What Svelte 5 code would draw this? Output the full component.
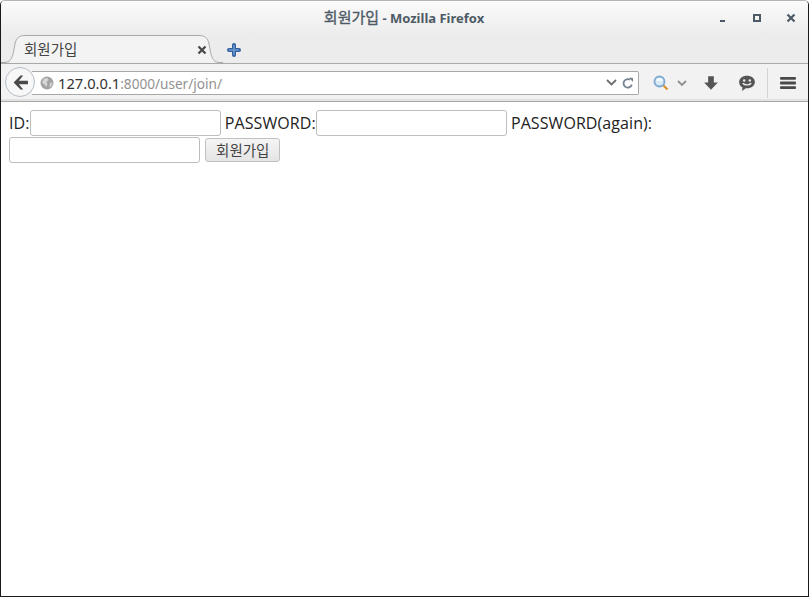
<script>
  let id = $state('');
  let password = $state('');
  let again = $state('');
</script>

<div class="window">
  <header class="titlebar">
    <div class="title"><span class="title-ko">회원가입</span> - Mozilla Firefox</div>
    <div class="controls">
      <svg width="12" height="12" viewBox="0 0 12 12"><rect x="3" y="8" width="5" height="2" fill="#4b5a66" /></svg>
      <svg width="12" height="12" viewBox="0 0 12 12"><rect x="3" y="3" width="6" height="6" fill="none" stroke="#4b5a66" stroke-width="2" /></svg>
      <svg width="12" height="12" viewBox="0 0 12 12"><path d="M2.500 2.500l7 7M9.500 2.500l-7 7" stroke="#4b5a66" stroke-width="2.200" /></svg>
    </div>
  </header>

  <div class="tabstrip">
    <div class="tab">
      <svg class="tab-shape" width="222" height="29" viewBox="0 0 222 29">
        <path d="M0 27.500H3C9 27.500 11 24 12.500 17L14 9C15 3.500 18 .5 24 .5H198C204 .5 207 3.500 208 9L209.500 17C211 24 213 27.500 219 27.500H222" fill="#f3f3f3" stroke="#a9a9a9" />
      </svg>
      <span class="tab-label">회원가입</span>
      <svg class="tab-close" width="10" height="10" viewBox="0 0 10 10"><path d="M1.500 1.500l7 7M8.500 1.500l-7 7" stroke="#4a4a4a" stroke-width="2.300" /></svg>
    </div>
    <svg class="newtab" width="14" height="14" viewBox="0 0 14 14">
      <path d="M7 2v10M2 7h10" stroke="#2f5f9e" stroke-width="4" stroke-linecap="round" />
      <path d="M7 2.500v9M2.500 7h9" stroke="#6f9bd1" stroke-width="1.600" stroke-linecap="round" />
    </svg>
  </div>

  <nav class="toolbar">
    <button class="back" aria-label="Back">
      <svg width="17" height="17" viewBox="0 0 16 16"><path d="M8 1.500L1.500 8 8 14.500h2.500L6.500 9.700H15V6.300H6.500L10.500 1.500z" fill="#4a4a4a" /></svg>
    </button>
    <div class="urlbar">
      <svg class="globe" width="14" height="14" viewBox="0 0 14 14">
        <circle cx="7" cy="7" r="6.500" fill="#a3a3a3" />
        <path d="M4 2.500L7.500 2 8.500 4 6.500 6 7.500 8 6 11 4.500 8.500 2 6.500zM10 7l2.500-.5L11.500 10l-2 1.500z" fill="#d6d6d6" />
      </svg>
      <span class="url"><span class="host">127.0.0.1</span>:8000/user/join/</span>
      <svg class="drop" width="11" height="7" viewBox="0 0 11 7"><path d="M1 1l4.500 4.500L10 1" fill="none" stroke="#6e6e6e" stroke-width="1.800" /></svg>
      <svg class="reload" width="12" height="12" viewBox="0 0 12 12">
        <path d="M9.800 7.500A4.200 4.200 0 1 1 8 2.800" fill="none" stroke="#75838f" stroke-width="1.800" />
        <path d="M6.800 0.500L11 1v4z" fill="#75838f" />
      </svg>
    </div>
    <div class="search">
      <svg width="16" height="16" viewBox="0 0 16 16">
        <line x1="10" y1="10" x2="14.500" y2="14.500" stroke="#d9912f" stroke-width="2.200" />
        <circle cx="6.500" cy="6.500" r="5" fill="#d7e8f7" stroke="#7fa9cf" stroke-width="1.800" />
        <path d="M3.500 6a3 3 0 0 1 6 0z" fill="#f7fbff" />
      </svg>
      <svg width="10" height="7" viewBox="0 0 10 7"><path d="M1 1l4 4 4-4" fill="none" stroke="#8f8f8f" stroke-width="1.800" /></svg>
    </div>
    <svg class="download" width="16" height="16" viewBox="0 0 14 14"><path d="M4.500 1h5v5.500H13L7 13 1 6.500h3.500z" fill="#555" /></svg>
    <svg class="chat" width="18" height="18" viewBox="0 0 16 16">
      <path d="M8 1.500c4 0 7 2.400 7 5.600s-3 5.600-7 5.600h-1L3.500 15l.5-3C2 11 1 9.200 1 7.100 1 3.900 4 1.500 8 1.500z" fill="#555" />
      <circle cx="5.500" cy="5.800" r="1.100" fill="#ececec" />
      <circle cx="10.500" cy="5.800" r="1.100" fill="#ececec" />
      <path d="M4.200 8.200c1.800 2 5.800 2 7.600 0" fill="none" stroke="#ececec" stroke-width="1.200" />
    </svg>
    <span class="divider"></span>
    <svg class="menu" width="16" height="14" viewBox="0 0 16 14">
      <rect y="1" width="16" height="2.800" rx="1" fill="#4a4a4a" />
      <rect y="5.600" width="16" height="2.800" rx="1" fill="#4a4a4a" />
      <rect y="10.200" width="16" height="2.800" rx="1" fill="#4a4a4a" />
    </svg>
  </nav>

  <main class="page">
    <form onsubmit={(e) => e.preventDefault()}>
      ID:<input type="text" bind:value={id} />
      PASSWORD:<input type="password" bind:value={password} />
      PASSWORD(again):
      <input type="password" bind:value={again} />
      <button class="submit" type="submit">회원가입</button>
    </form>
  </main>
</div>

<style>
  :global(body) {
    margin: 0;
    background: #fff;
  }

  .window {
    box-sizing: border-box;
    width: 809px;
    height: 597px;
    display: flex;
    flex-direction: column;
    border: 1px solid #1a1a1a;
    border-top-color: #b5b5b5;
    border-radius: 5px 5px 0 0;
    overflow: hidden;
    background: #fff;
  }

  .titlebar {
    height: 34px;
    flex: none;
    display: flex;
    align-items: center;
    justify-content: center;
    position: relative;
    background: linear-gradient(180deg, #fbfbfb 0%, #ececec 100%);
  }

  .title {
    font: 700 13px "Noto Sans", "Noto Sans CJK KR", sans-serif;
    color: #4d5a66;
    margin-top: -3px;
    margin-left: -1px;
  }

  .title-ko {
    font-size: 15px;
    font-weight: 400;
    -webkit-text-stroke: 0.35px #4d5a66;
  }

  .controls {
    position: absolute;
    top: 11px;
    right: 11px;
    display: flex;
    gap: 22px;
  }

  .tabstrip {
    height: 29px;
    flex: none;
    display: flex;
    align-items: flex-start;
    background: #ececec;
    box-shadow: inset 0 -1px 0 #a9a9a9;
  }

  .tab {
    position: relative;
    width: 222px;
    height: 29px;
    flex: none;
  }

  .tab-shape {
    position: absolute;
    inset: 0;
  }

  .tab-label {
    position: absolute;
    left: 23px;
    top: 4px;
    font: 14.500px "Noto Sans CJK KR", sans-serif;
    line-height: 20px;
    color: #444;
  }

  .tab-close {
    position: absolute;
    left: 196px;
    top: 10px;
  }

  .newtab {
    margin: 8px 0 0 4px;
  }

  .toolbar {
    height: 38px;
    flex: none;
    display: flex;
    align-items: center;
    position: relative;
    background: #f2f2f2;
    border-bottom: 1px solid #a9a9a9;
    box-sizing: border-box;
    box-shadow: inset 0 -2px 0 #e2e2e2;
    padding-left: 4px;
  }

  .back {
    width: 30px;
    height: 30px;
    margin-top: -1px;
    flex: none;
    padding: 0;
    display: flex;
    align-items: center;
    justify-content: center;
    border: 1px solid #b4bcc6;
    border-radius: 50%;
    background: #f7f7f7;
    position: relative;
    z-index: 1;
  }

  .urlbar {
    width: 607px;
    height: 24px;
    margin: 0 0 0 -3px;
    box-sizing: border-box;
    flex: none;
    display: flex;
    align-items: center;
    background: #fff;
    border: 1px solid #a8a8a8;
    border-left: none;
    border-radius: 0 2px 2px 0;
    padding-left: 8px;
  }

  .url {
    margin-left: 4px;
    font: 13.600px "Noto Sans", sans-serif;
    color: #929292;
  }

  .host {
    font-size: 14.700px;
    color: #333;
  }

  .drop {
    margin-left: auto;
    margin-right: -1px;
  }

  .reload {
    margin: 0 4px 0 6px;
  }

  .search {
    display: flex;
    align-items: center;
    gap: 8px;
    margin: 1px 0 0 14px;
  }

  .download {
    margin: 0 0 0 16px;
  }

  .chat {
    margin: 0 0 0 19px;
  }

  .divider {
    width: 1px;
    height: 30px;
    background: #d4d4d4;
    margin-left: 11px;
  }

  .menu {
    margin: 0 0 0 12px;
  }

  .page {
    flex: 1;
    padding: 8px;
    background: #fff;
    font: 16px/1.300 "Open Sans", "Noto Sans CJK KR", sans-serif;
    letter-spacing: 0.080px;
    color: #222;
  }

  input {
    box-sizing: border-box;
    width: 191px;
    height: 26px;
    padding: 2px 4px;
    margin-bottom: 1px;
    border: 1px solid #bdbdbd;
    border-radius: 3px;
    background: #fff;
    font: inherit;
  }

  .submit {
    box-sizing: border-box;
    width: 75px;
    height: 24px;
    padding: 0;
    margin-left: 1px;
    border: 1px solid #c0c0c0;
    border-radius: 3px;
    background: linear-gradient(180deg, #f5f5f5, #e4e4e4);
    font: 14.500px "Noto Sans CJK KR", sans-serif;
    color: #444;
  }
</style>
